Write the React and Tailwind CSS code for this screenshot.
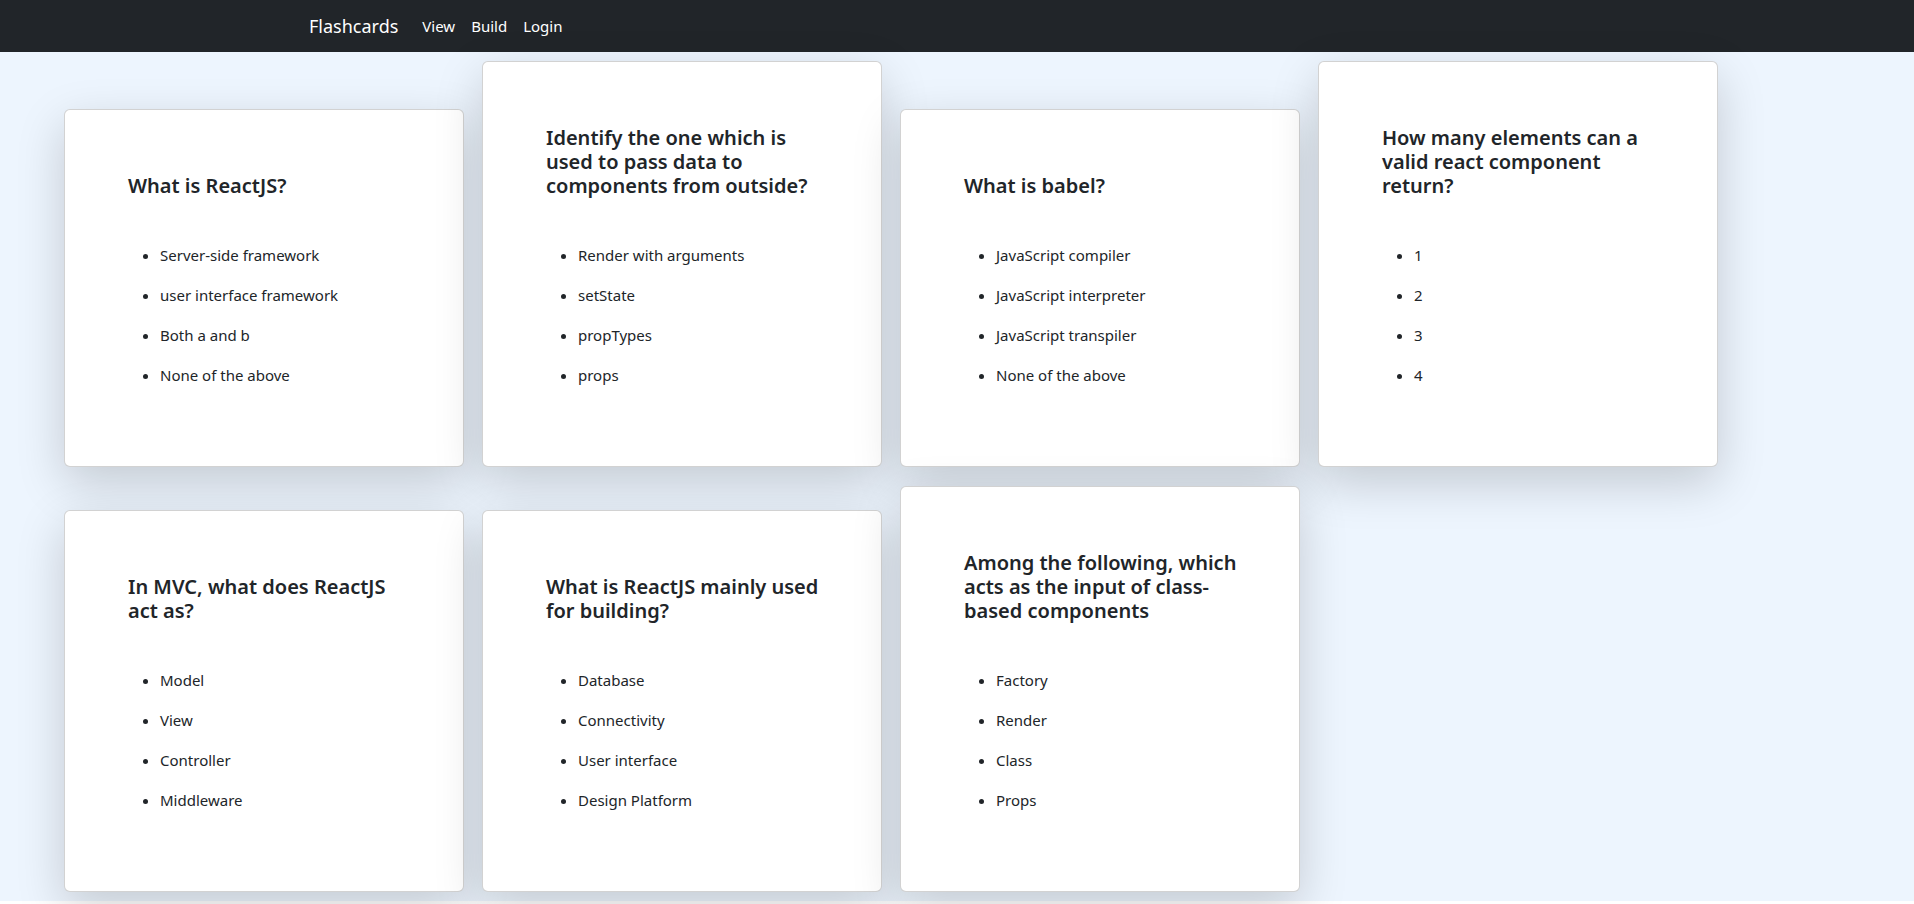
import React from 'react';

const cards = [
  {
    q: 'What is ReactJS?',
    options: ['Server-side framework', 'user interface framework', 'Both a and b', 'None of the above'],
  },
  {
    q: 'Identify the one which is used to pass data to components from outside?',
    options: ['Render with arguments', 'setState', 'propTypes', 'props'],
  },
  {
    q: 'What is babel?',
    options: ['JavaScript compiler', 'JavaScript interpreter', 'JavaScript transpiler', 'None of the above'],
  },
  {
    q: 'How many elements can a valid react component return?',
    options: ['1', '2', '3', '4'],
  },
  {
    q: 'In MVC, what does ReactJS act as?',
    options: ['Model', 'View', 'Controller', 'Middleware'],
  },
  {
    q: 'What is ReactJS mainly used for building?',
    options: ['Database', 'Connectivity', 'User interface', 'Design Platform'],
  },
  {
    q: 'Among the following, which acts as the input of class-based components',
    options: ['Factory', 'Render', 'Class', 'Props'],
  },
];

function Flashcard({ q, options }) {
  return (
    <div className="w-[400px] rounded-md border border-black/[0.175] bg-white pb-[79px] pl-[63px] pr-[50px] pt-[64px] shadow-[0_16px_48px_rgba(0,0,0,0.175)]">
      <h5 className="mb-[45px] text-[20px] font-semibold leading-[24px] text-[#212529]">{q}</h5>
      <ul className="list-disc space-y-4 pl-8 text-[15px] leading-[24px] text-[#212529]">
        {options.map((o) => (
          <li key={o}>{o}</li>
        ))}
      </ul>
    </div>
  );
}

export default function App() {
  return (
    <div className="min-h-screen bg-white font-['Noto_Sans','Open_Sans',sans-serif]">
      <nav className="h-[52px] bg-[#212529]">
        <div className="mx-auto flex h-full w-[1320px] items-center px-3">
          <a className="mr-4 text-[18px] leading-[30px] text-white" href="#">
            Flashcards
          </a>
          <div className="flex text-[15px] leading-[24px] text-white">
            <a className="px-2" href="#">View</a>
            <a className="px-2" href="#">Build</a>
            <a className="px-2" href="#">Login</a>
          </div>
        </div>
      </nav>

      <main className="flex flex-wrap items-end gap-x-[18px] gap-y-[19px] bg-[#edf5fe] pb-[9px] pl-[64px] pt-[9px]">
        {cards.map((c) => (
          <Flashcard key={c.q} q={c.q} options={c.options} />
        ))}
      </main>
    </div>
  );
}
